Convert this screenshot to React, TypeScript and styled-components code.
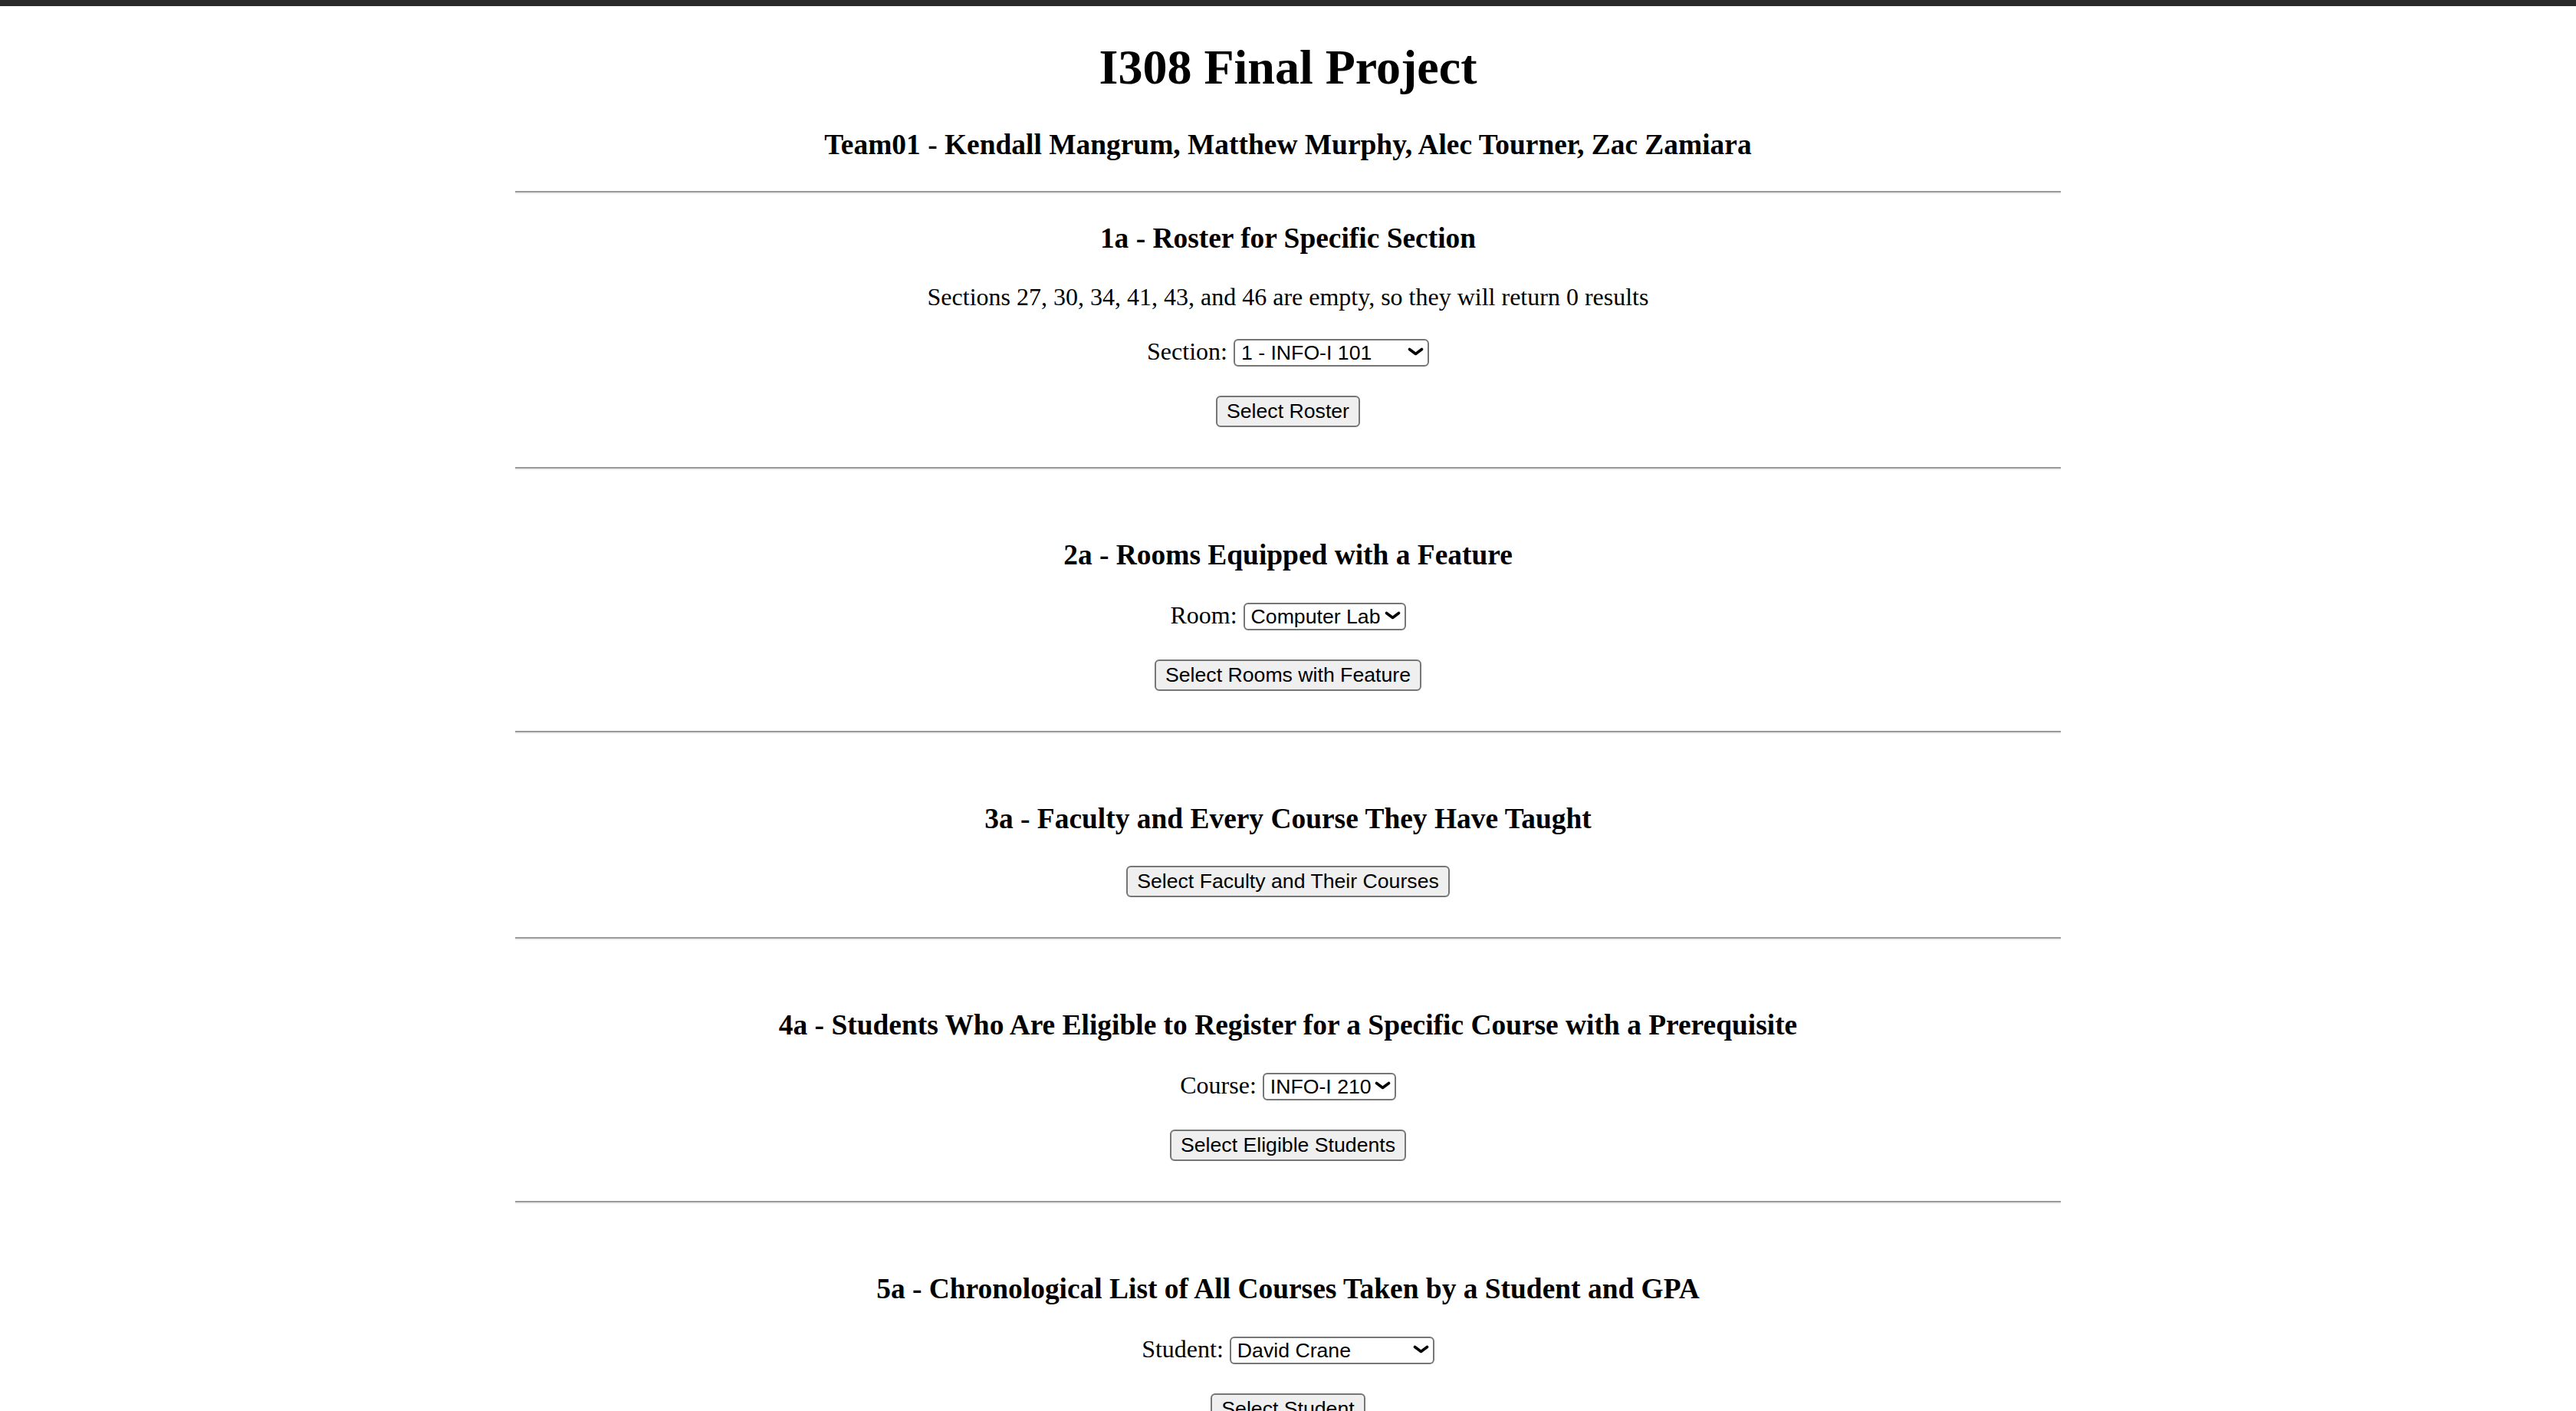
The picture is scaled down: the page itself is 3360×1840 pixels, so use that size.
import * as React from 'react';
import styled, { createGlobalStyle } from 'styled-components';

const serif = '"Liberation Serif", "Times New Roman", serif';
const sans = '"Liberation Sans", Arial, sans-serif';

const GlobalStyle = createGlobalStyle`
  html, body {
    margin: 0;
    padding: 0;
    background: #ffffff;
  }
  body {
    font-family: ${serif};
    color: #000000;
  }
`;

const TopBar = styled.div`
  height: 8px;
  background-color: #2a2a2a;
`;

const Page = styled.main`
  display: flex;
  flex-direction: column;
  align-items: center;
  text-align: center;
  padding: 0 0 80px;
`;

const Title = styled.h1`
  margin: 43px 0 0;
  font-size: 64px;
  line-height: 74px;
  font-weight: bold;
`;

const Heading = styled.h3<{ $top: number }>`
  margin: ${(p) => p.$top}px 0 0;
  font-size: 37.44px;
  line-height: 43px;
  font-weight: bold;
`;

const Rule = styled.hr<{ $top: number }>`
  box-sizing: border-box;
  width: 60%;
  height: 4px;
  margin: ${(p) => p.$top}px 0 0;
  border: none;
  border-top: 2px solid #9a9a9a;
  border-bottom: 2px solid #eeeeee;
`;

const Note = styled.p`
  margin: 37px 0 0;
  font-size: 32px;
  line-height: 37px;
`;

const Field = styled.div<{ $top: number }>`
  display: flex;
  align-items: baseline;
  gap: 8px;
  margin-top: ${(p) => p.$top}px;
  font-size: 32px;
  line-height: 36px;
`;

const SelectWrap = styled.span`
  position: relative;
  display: inline-flex;
`;

const Select = styled.select<{ $width: number }>`
  appearance: none;
  -webkit-appearance: none;
  box-sizing: border-box;
  width: ${(p) => p.$width}px;
  height: 36px;
  padding: 0 24px 0 8px;
  border: 2px solid #767676;
  border-radius: 6px;
  background: #ffffff;
  color: #000000;
  font-family: ${sans};
  font-size: 26.67px;
  outline: none;
`;

const Chevron = styled.svg`
  position: absolute;
  right: 7px;
  top: 11px;
  width: 21px;
  height: 11px;
  pointer-events: none;
`;

const Submit = styled.button<{ $top: number }>`
  box-sizing: border-box;
  height: 41px;
  margin-top: ${(p) => p.$top}px;
  padding: 0 12px;
  border: 2px solid #767676;
  border-radius: 6px;
  background: #efefef;
  color: #000000;
  font-family: ${sans};
  font-size: 26.67px;
  line-height: 1;
  cursor: pointer;
`;

const Dropdown = ({ width, value }: { width: number; value: string }) => (
  <SelectWrap>
    <Select $width={width} defaultValue={value}>
      <option>{value}</option>
    </Select>
    <Chevron viewBox="0 0 21 11">
      <path
        d="M2.5 2.5 L10.5 8.5 L18.5 2.5"
        fill="none"
        stroke="#000"
        strokeWidth={3.6}
        strokeLinecap="round"
        strokeLinejoin="round"
      />
    </Chevron>
  </SelectWrap>
);

interface QueryProps {
  title: string;
  first?: boolean;
  note?: string;
  label?: string;
  option?: string;
  selectWidth?: number;
  fieldTop?: number;
  button: string;
  buttonTop: number;
}

const Query = ({
  title,
  first,
  note,
  label,
  option,
  selectWidth,
  fieldTop = 39,
  button,
  buttonTop,
}: QueryProps) => (
  <>
    <Rule $top={first ? 39 : 52} />
    <Heading $top={first ? 36 : 89}>{title}</Heading>
    {note && <Note>{note}</Note>}
    {label && option && selectWidth && (
      <Field $top={fieldTop}>
        <span>{label}</span>
        <Dropdown width={selectWidth} value={option} />
      </Field>
    )}
    <Submit $top={buttonTop}>{button}</Submit>
  </>
);

const App = () => (
  <>
    <GlobalStyle />
    <TopBar />
    <Page>
      <Title>I308 Final Project</Title>
      <Heading $top={42}>
        Team01 - Kendall Mangrum, Matthew Murphy, Alec Tourner, Zac Zamiara
      </Heading>
      <Query
        first
        title="1a - Roster for Specific Section"
        note="Sections 27, 30, 34, 41, 43, and 46 are empty, so they will return 0 results"
        label="Section:"
        option="1 - INFO-I 101"
        selectWidth={255}
        fieldTop={34}
        button="Select Roster"
        buttonTop={38}
      />
      <Query
        title="2a - Rooms Equipped with a Feature"
        label="Room:"
        option="Computer Lab"
        selectWidth={212}
        button="Select Rooms with Feature"
        buttonTop={38}
      />
      <Query
        title="3a - Faculty and Every Course They Have Taught"
        button="Select Faculty and Their Courses"
        buttonTop={40}
      />
      <Query
        title="4a - Students Who Are Eligible to Register for a Specific Course with a Prerequisite"
        label="Course:"
        option="INFO-I 210"
        selectWidth={174}
        button="Select Eligible Students"
        buttonTop={38}
      />
      <Query
        title="5a - Chronological List of All Courses Taken by a Student and GPA"
        label="Student:"
        option="David Crane"
        selectWidth={267}
        button="Select Student"
        buttonTop={38}
      />
    </Page>
  </>
);

export default App;
